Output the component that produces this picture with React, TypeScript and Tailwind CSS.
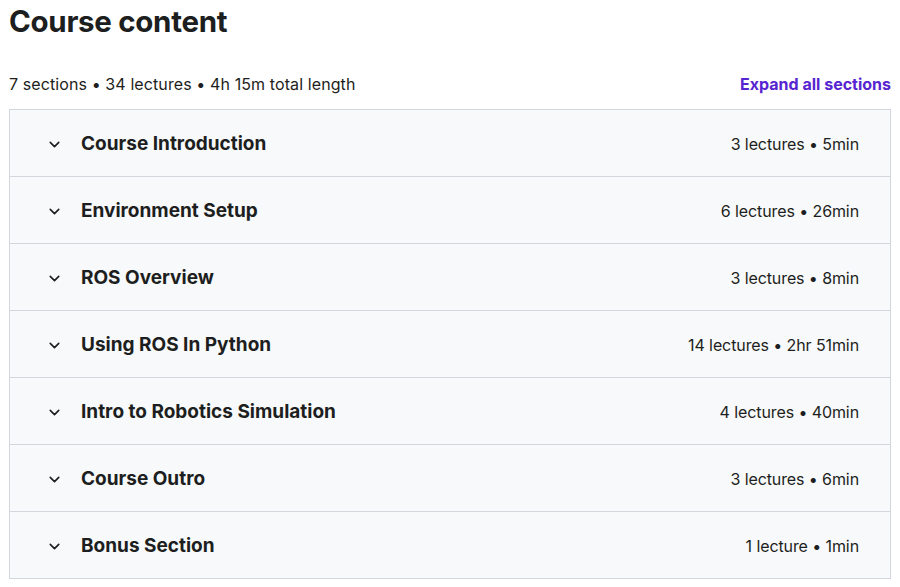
import { ChevronDown } from 'lucide-react'

interface Section {
  title: string
  meta: string
}

const sections: Section[] = [
  { title: 'Course Introduction', meta: '3 lectures • 5min' },
  { title: 'Environment Setup', meta: '6 lectures • 26min' },
  { title: 'ROS Overview', meta: '3 lectures • 8min' },
  { title: 'Using ROS In Python', meta: '14 lectures • 2hr 51min' },
  { title: 'Intro to Robotics Simulation', meta: '4 lectures • 40min' },
  { title: 'Course Outro', meta: '3 lectures • 6min' },
  { title: 'Bonus Section', meta: '1 lecture • 1min' },
]

export default function App() {
  return (
    <div className="min-h-[587px] w-[900px] bg-white px-[9px] font-['Inter',sans-serif] text-[#1d1e20]">
      <h2 className="pt-[1px] text-[29.5px] font-bold leading-[40px] tracking-[-0.3px]">Course content</h2>

      <div className="mt-[31px] flex items-center justify-between pb-[13px] text-[16px] leading-[24px]">
        <span className="tracking-[0.1px]">7 sections • 34 lectures • 4h 15m total length</span>
        <button type="button" className="font-bold text-[#5624d0]">
          Expand all sections
        </button>
      </div>

      <div className="border border-[#d1d7dc]">
        {sections.map((s, i) => (
          <div
            key={s.title}
            className={
              'flex items-center bg-[#f7f9fa] pl-[36px] pr-[31px] pt-[2px] ' +
              (i > 0 ? 'h-[67px] border-t border-[#d1d7dc]' : 'h-[66px]')
            }
          >
            <ChevronDown className="h-[17px] w-[17px]" strokeWidth={2.25} />
            <span className="ml-[18px] flex-1 text-[19px] font-bold leading-[24px]">{s.title}</span>
            <span className="text-[16px] tracking-[-0.1px]">{s.meta}</span>
          </div>
        ))}
      </div>
    </div>
  )
}
